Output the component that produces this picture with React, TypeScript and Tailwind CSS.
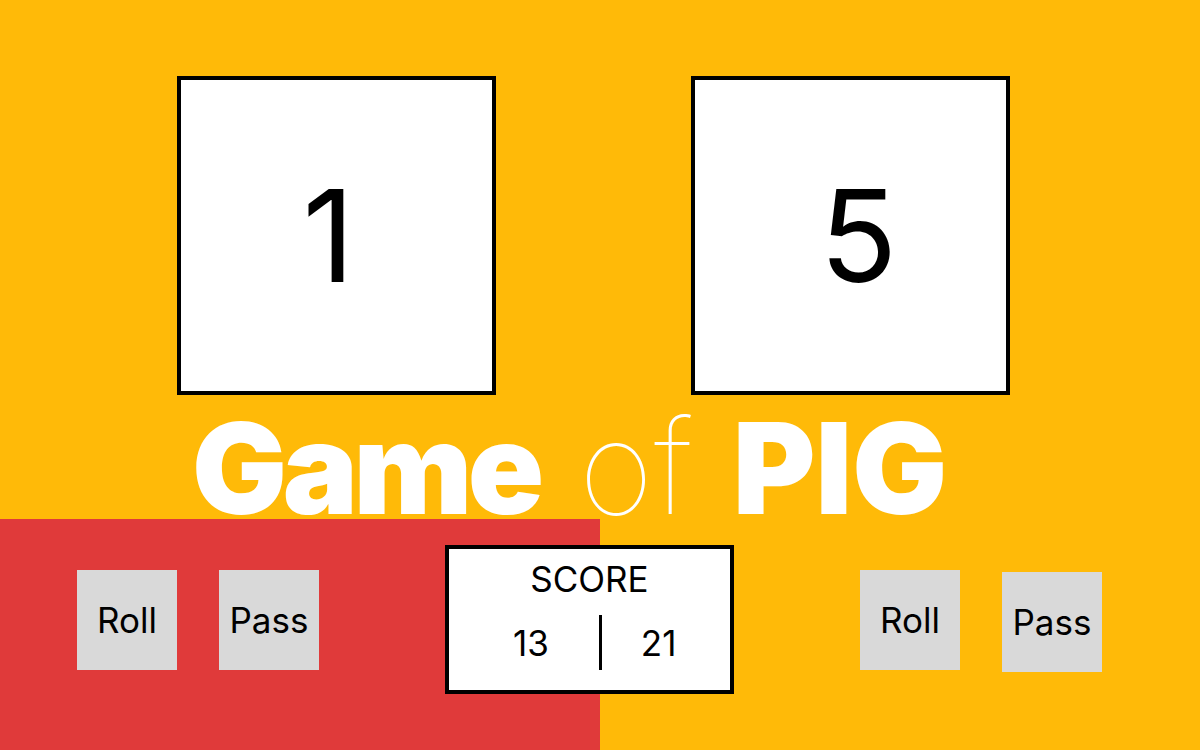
import React from 'react';

const font = { fontFamily: 'Inter, "Noto Sans", sans-serif' };

const Die: React.FC<{ value: number; className?: string }> = ({ value, className }) => (
  <div className="w-[319px] h-[319px] border-4 border-black bg-white flex items-center justify-center text-[128px] leading-none text-black">
    <span className={className}>{value}</span>
  </div>
);

const GameButton: React.FC<{ label: string; className?: string }> = ({ label, className }) => (
  <button className={`w-[100px] h-[100px] bg-[#D9D9D9] text-black text-[35px] leading-none flex items-center justify-center ${className || ''}`}>
    {label}
  </button>
);

const App: React.FC = () => {
  return (
    <div className="w-[1200px] h-[750px] bg-[#FFBA08] flex flex-col overflow-hidden" style={font}>
      <div className="h-[519px] flex flex-col">
        <div className="flex pt-[76px] pl-[177px] gap-[195px]">
          <Die value={1} className="mr-[16px]" />
          <Die value={5} className="ml-[16px]" />
        </div>
        <h1 className="mt-[21px] pl-[192px] text-[126px] leading-[100px] text-white whitespace-nowrap flex items-baseline">
          <span className="font-black tracking-[-0.035em]">Game</span>
          <span className="font-thin text-[128px] ml-[39px]">o</span>
          <span className="font-thin text-[132px] ml-[1px]">f</span>
          <span className="font-black ml-[40px]">PIG</span>
        </h1>
      </div>

      <div className="relative flex flex-1">
        <div className="w-[600px] bg-[#E03A3A] flex items-start pt-[51px] pl-[77px] gap-[42px]">
          <GameButton label="Roll" />
          <GameButton label="Pass" />
        </div>
        <div className="flex-1 flex items-start pt-[51px] pl-[260px] gap-[42px]">
          <GameButton label="Roll" />
          <GameButton label="Pass" className="mt-[2px]" />
        </div>

        <div className="absolute left-[445px] top-[26px] w-[289px] h-[149px] border-4 border-black bg-white flex flex-col items-center pt-[10px]">
          <div className="text-[35px] leading-[40px] text-black">SCORE</div>
          <div className="mt-[16px] w-full flex items-center pl-[64px] text-[35px] leading-[40px] text-black">
            <span>13</span>
            <div className="ml-[50px] w-[3px] h-[55px] bg-black" />
            <span className="ml-[39px]">21</span>
          </div>
        </div>
      </div>
    </div>
  );
};

export default App;
